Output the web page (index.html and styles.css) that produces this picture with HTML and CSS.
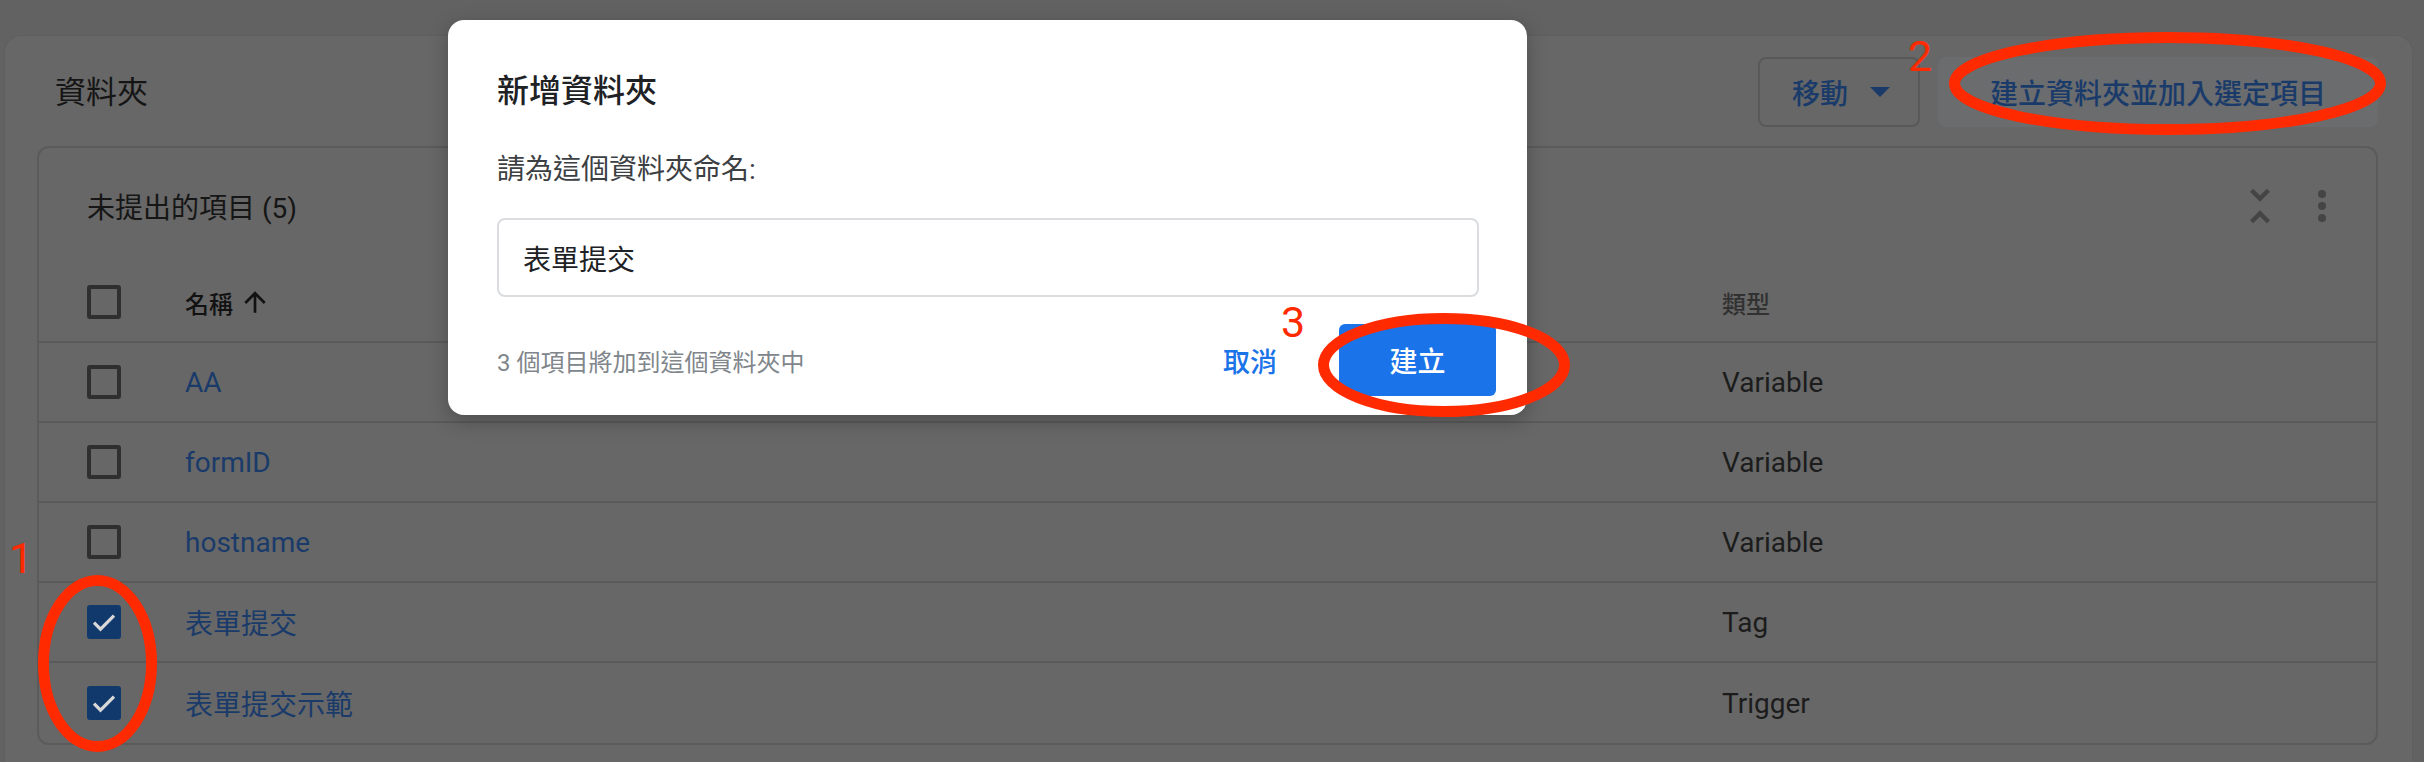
FILE: index.html
```html
<!DOCTYPE html>
<html lang="zh-Hant">
<head>
<meta charset="utf-8">
<title>資料夾</title>
<link rel="stylesheet" href="styles.css">
</head>
<body>
<div class="page">
  <section class="folder-card">
    <div class="folder-head">
      <h1 class="folder-title">資料夾</h1>
      <div class="actions">
        <button class="btn-move">移動<span class="caret"></span></button>
        <button class="btn-create-folder">建立資料夾並加入選定項目</button>
      </div>
    </div>
    <div class="items-card">
      <div class="items-head">
        <h2 class="items-title">未提出的項目 (5)</h2>
        <div class="head-icons">
          <svg class="ico-unfold" viewBox="0 0 24 24" width="52" height="52"><path d="M7.41 18.59L8.83 20 12 16.83 15.17 20l1.41-1.41L12 14l-4.59 4.59zm9.18-13.18L15.17 4 12 7.17 8.83 4 7.41 5.41 12 10l4.59-4.59z"/></svg>
          <svg class="ico-more" viewBox="0 0 24 24" width="48" height="48"><circle cx="12" cy="6" r="2"/><circle cx="12" cy="12" r="2"/><circle cx="12" cy="18" r="2"/></svg>
        </div>
      </div>
      <div class="table">
        <div class="row row-head">
          <span class="cb"></span>
          <span class="th th-sorted">名稱<svg class="ico-sort" viewBox="0 0 24 24" width="32" height="32"><path d="M4 12l1.41 1.41L11 7.83V20h2V7.83l5.58 5.59L20 12l-8-8-8 8z"/></svg></span>
          <span class="th">類型</span>
        </div>
        <div class="row">
          <span class="cb"></span>
          <span class="name">AA</span>
          <span class="type">Variable</span>
        </div>
        <div class="row">
          <span class="cb"></span>
          <span class="name">formID</span>
          <span class="type">Variable</span>
        </div>
        <div class="row">
          <span class="cb"></span>
          <span class="name">hostname</span>
          <span class="type">Variable</span>
        </div>
        <div class="row">
          <span class="cb checked"><svg viewBox="0 0 24 24" width="30" height="30"><path d="M4 12.5 L9.2 17.7 L20 6.9"/></svg></span>
          <span class="name">表單提交</span>
          <span class="type">Tag</span>
        </div>
        <div class="row">
          <span class="cb checked"><svg viewBox="0 0 24 24" width="30" height="30"><path d="M4 12.5 L9.2 17.7 L20 6.9"/></svg></span>
          <span class="name">表單提交示範</span>
          <span class="type">Trigger</span>
        </div>
      </div>
    </div>
  </section>
</div>

<div class="dialog">
  <h2 class="dialog-title">新增資料夾</h2>
  <p class="dialog-label">請為這個資料夾命名:</p>
  <input class="name-input" type="text" value="表單提交" readonly>
  <div class="dialog-footer">
    <span class="hint">3 個項目將加到這個資料夾中</span>
    <div class="dialog-actions">
      <button class="btn-cancel">取消</button>
      <button class="btn-confirm">建立</button>
    </div>
  </div>
</div>

<svg class="marks" viewBox="0 0 2424 762" width="2424" height="762">
  <ellipse cx="97.5" cy="663.5" rx="54" ry="83"/>
  <ellipse cx="2167.5" cy="83.5" rx="213" ry="46"/>
  <ellipse cx="1444" cy="365" rx="120.5" ry="46.5"/>
</svg>
<span class="mark-num n1">1</span>
<span class="mark-num n2">2</span>
<span class="mark-num n3">3</span>
</body>
</html>
```

FILE: styles.css
```css
* { box-sizing: border-box; }

body {
  margin: 0;
  width: 2424px;
  height: 762px;
  overflow: hidden;
  position: relative;
  background: #626262;
  font-family: Roboto, "Noto Sans CJK TC", sans-serif;
}

.page {
  padding: 36px 12px 0 5px;
}

.folder-card {
  height: 726px;
  background: #676767;
  border-radius: 16px 16px 0 0;
  box-shadow: 0 0 0 1px #5f5f5f;
  padding: 21px 34px 0 32px;
}

.folder-head {
  display: flex;
  align-items: center;
  justify-content: space-between;
  height: 70px;
  margin-bottom: 19px;
}

.folder-title {
  margin: 0 0 6px 18px;
  font-size: 31px;
  font-weight: 400;
  color: #151515;
}

.actions {
  display: flex;
  gap: 18px;
}

.btn-move {
  display: flex;
  align-items: center;
  width: 162px;
  height: 70px;
  padding: 0 0 0 32px;
  border: 2px solid #595959;
  border-radius: 8px;
  background: transparent;
  font-family: Roboto, "Noto Sans CJK TC", sans-serif;
  font-size: 28px;
  font-weight: 500;
  color: #1a3b6a;
}

.caret {
  margin-left: 22px;
  width: 0;
  height: 0;
  border-left: 10px solid transparent;
  border-right: 10px solid transparent;
  border-top: 10px solid #1a3b6a;
}

.btn-create-folder {
  width: 440px;
  height: 70px;
  border: none;
  border-radius: 8px;
  background: #6b6c6e;
  font-family: Roboto, "Noto Sans CJK TC", sans-serif;
  font-size: 28px;
  font-weight: 500;
  color: #1a3b6a;
}

.items-card {
  height: 599px;
  border: 2px solid #5b5b5b;
  border-radius: 12px;
  overflow: hidden;
}

.items-head {
  display: flex;
  align-items: center;
  justify-content: space-between;
  height: 115px;
  padding: 0 30px 0 48px;
}

.items-title {
  margin: 0;
  font-size: 28px;
  font-weight: 400;
  color: #161616;
}

.head-icons {
  display: flex;
  align-items: center;
  gap: 12px;
  fill: #454545;
}

.row {
  display: grid;
  grid-template-columns: 98px 1537px 1fr;
  align-items: center;
  height: 80px;
  padding-left: 48px;
  border-bottom: 2px solid #5a5a5a;
}

.row:last-child {
  border-bottom: none;
}

.cb {
  display: flex;
  align-items: center;
  justify-content: center;
  width: 34px;
  height: 34px;
  border: 4px solid #2f2f2f;
  border-radius: 3px;
}

.cb.checked {
  background: #12396c;
  border-color: #12396c;
}

.cb svg {
  flex: none;
  fill: none;
  stroke: #d8d8d8;
  stroke-width: 2.6;
}

.th {
  display: flex;
  align-items: center;
  font-size: 24px;
  font-weight: 500;
  color: #313131;
}

.th-sorted {
  color: #121212;
}

.ico-sort {
  margin-left: 6px;
  fill: #121212;
}

.name {
  font-size: 28px;
  color: #1a3b6a;
}

.type {
  font-size: 28px;
  color: #1c1c1c;
}

/* dialog */
.dialog {
  position: absolute;
  left: 448px;
  top: 20px;
  width: 1079px;
  height: 395px;
  padding: 51px 48px 19px 49px;
  background: #ffffff;
  border-radius: 16px;
  box-shadow: 0 6px 20px rgba(0, 0, 0, 0.25);
}

.dialog-title {
  margin: 0;
  font-size: 32px;
  line-height: 40px;
  font-weight: 500;
  color: #202124;
}

.dialog-label {
  margin: 39px 0 0;
  font-size: 28px;
  line-height: 40px;
  color: #3c4043;
}

.name-input {
  display: block;
  width: 100%;
  height: 79px;
  margin-top: 28px;
  padding: 0 24px;
  border: 2px solid #dadce0;
  border-radius: 8px;
  outline: none;
  font-family: Roboto, "Noto Sans CJK TC", sans-serif;
  font-size: 28px;
  color: #202124;
  background: #fff;
}

.dialog-footer {
  display: flex;
  align-items: center;
  justify-content: space-between;
  height: 72px;
  margin-top: 27px;
  margin-right: -17px;
}

.hint {
  font-size: 24px;
  color: #80868b;
}

.dialog-actions {
  display: flex;
  align-items: center;
}

.btn-cancel {
  height: 72px;
  padding: 0 24px;
  margin-right: 38px;
  border: none;
  background: none;
  font-family: Roboto, "Noto Sans CJK TC", sans-serif;
  font-size: 27px;
  font-weight: 500;
  color: #1a73e8;
}

.btn-confirm {
  width: 157px;
  height: 72px;
  border: none;
  border-radius: 6px;
  background: #1a73e8;
  font-family: Roboto, "Noto Sans CJK TC", sans-serif;
  font-size: 28px;
  font-weight: 500;
  color: #ffffff;
}

/* annotations */
.marks {
  position: absolute;
  left: 0;
  top: 0;
  pointer-events: none;
  fill: none;
  stroke: #ff2a00;
  stroke-width: 11;
}

.mark-num {
  position: absolute;
  font-family: Roboto, sans-serif;
  font-weight: 400;
  font-size: 43px;
  line-height: 1;
  color: #ff2a00;
}

.n1 { left: 9px; top: 537px; }
.n2 { left: 1908px; top: 35px; }
.n3 { left: 1281px; top: 301px; }
```
